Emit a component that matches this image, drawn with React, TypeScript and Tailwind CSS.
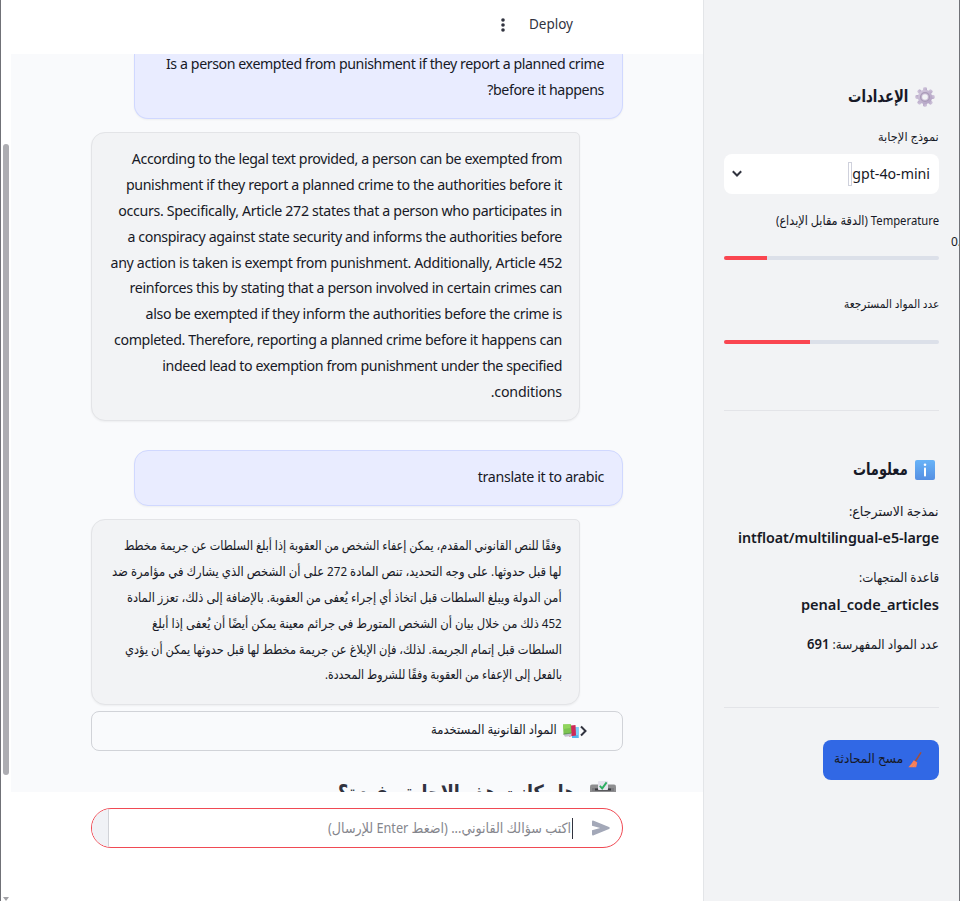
import { useLayoutEffect, useRef } from "react";
import type { ReactNode } from "react";

/* A single line of text fitted to a given measure: Latin by tracking, Arabic by width. */
function Line({ w, latin, className = "", children }: { w: number; latin?: boolean; className?: string; children: ReactNode }) {
  const ref = useRef<HTMLSpanElement>(null);
  useLayoutEffect(() => {
    const el = ref.current;
    if (!el) return;
    const fit = () => {
      el.style.letterSpacing = "";
      el.style.transform = "";
      const natural = el.offsetWidth;
      if (latin) el.style.letterSpacing = `${(w - natural) / (el.textContent || " ").length}px`;
      else el.style.transform = `scaleX(${w / natural})`;
    };
    fit();
    document.fonts.ready.then(fit);
  }, [w, latin]);
  return (
    <div dir="rtl" className={`flex justify-start whitespace-nowrap ${className}`} style={{ width: w }}>
      <span ref={ref} className="shrink-0 origin-right">{children}</span>
    </div>
  );
}

function Gear() {
  return (
    <svg width="20" height="20" viewBox="0 0 20 20">
      <defs>
        <linearGradient id="gear" x1="0" y1="0" x2="1" y2="1">
          <stop offset="0" stopColor="#d5cbdf" />
          <stop offset="1" stopColor="#ae9dc0" />
        </linearGradient>
      </defs>
      <g fill="url(#gear)">
        {[0, 45, 90, 135, 180, 225, 270, 315].map((a) => (
          <rect key={a} x="8" y="0.3" width="4" height="5" rx="1.4" transform={`rotate(${a} 10 10)`} />
        ))}
        <circle cx="10" cy="10" r="7.2" />
      </g>
      <circle cx="10" cy="10" r="4.4" fill="#c9bdd5" stroke="#a99bb8" strokeWidth="1.3" />
      <circle cx="10" cy="10" r="2.8" fill="#f2f3f6" />
    </svg>
  );
}

function InfoIcon() {
  return (
    <svg width="20" height="20" viewBox="0 0 20 20">
      <defs>
        <linearGradient id="info" x1="0" y1="0" x2="0" y2="1">
          <stop offset="0" stopColor="#67b3f8" />
          <stop offset="1" stopColor="#558fe2" />
        </linearGradient>
      </defs>
      <rect width="20" height="20" rx="2" fill="url(#info)" />
      <circle cx="10" cy="4.8" r="1.3" fill="#fff" />
      <rect x="9" y="7.5" width="2" height="9" rx="0.8" fill="#fff" />
    </svg>
  );
}

function Broom() {
  return (
    <svg width="14" height="16" viewBox="0 0 14 16">
      <path d="M12.7 0.8 L7.6 9" stroke="#a2503c" strokeWidth="1.5" strokeLinecap="round" />
      <path d="M5.8 8.2 L9.3 10.4 L8.2 15.3 L0.4 15.2 L3.6 11.6 Z" fill="#fb7a54" />
      <path d="M2.2 14.8 L5.5 11.4 M5.2 15 L7.4 11.8" stroke="#d9a177" strokeWidth="0.6" />
    </svg>
  );
}

function Books() {
  return (
    <svg width="16" height="14" viewBox="0 0 16 14">
      <path d="M9 3 L15.5 3 L15.8 14 L9 14 Z" fill="#55b6ee" />
      <path d="M12 3 L15.5 3 L15.8 11 L12.5 11 Z" fill="#7ed0f7" />
      <path d="M8 1.5 L12.5 1 L13 11.5 L6 12.5 Z" fill="#cd2858" />
      <path d="M0 0.5 L8 0.2 L8.5 9 L0.5 10.5 Z" fill="#7cc351" />
      <path d="M0 0.5 L7 0.2 L7 4 L0.2 5 Z" fill="#91d55e" />
      <path d="M0.5 10.5 L8.5 9 L8.5 12 L2 12.8 Z" fill="#c4bed0" />
      <path d="M0.5 10.2 L8.5 9" stroke="#4a8a42" strokeWidth="0.8" />
    </svg>
  );
}

function BallotBox() {
  return (
    <svg width="26" height="24" viewBox="0 0 26 24">
      <rect x="0" y="3.5" width="26" height="20" rx="2" fill="#8e8e90" />
      <rect x="2" y="7" width="22" height="3" fill="#7b7b7f" />
      <rect x="5" y="7.5" width="16" height="2" fill="#38383c" />
      <rect x="8" y="0" width="10" height="9" rx="0.7" fill="#e6e4ee" />
      <path d="M9.8 4.8 L12.2 7.4 L16.6 1.4" fill="none" stroke="#2eae62" strokeWidth="1.9" />
    </svg>
  );
}

const answer: [number, string][] = [
  [430, "According to the legal text provided, a person can be exempted from"],
  [436, "punishment if they report a planned crime to the authorities before it"],
  [444, "occurs. Specifically, Article 272 states that a person who participates in"],
  [435, "a conspiracy against state security and informs the authorities before"],
  [451, "any action is taken is exempt from punishment. Additionally, Article 452"],
  [432, "reinforces this by stating that a person involved in certain crimes can"],
  [416, "also be exempted if they inform the authorities before the crime is"],
  [448, "completed. Therefore, reporting a planned crime before it happens can"],
  [400, "indeed lead to exemption from punishment under the specified"],
  [71, "conditions."],
];

const translation: [number, string][] = [
  [438, "وفقًا للنص القانوني المقدم، يمكن إعفاء الشخص من العقوبة إذا أبلغ السلطات عن جريمة مخطط"],
  [450, "لها قبل حدوثها. على وجه التحديد، تنص المادة 272 على أن الشخص الذي يشارك في مؤامرة ضد"],
  [435, "أمن الدولة ويبلغ السلطات قبل اتخاذ أي إجراء يُعفى من العقوبة. بالإضافة إلى ذلك، تعزز المادة"],
  [410, "452 ذلك من خلال بيان أن الشخص المتورط في جرائم معينة يمكن أيضًا أن يُعفى إذا أبلغ"],
  [437, "السلطات قبل إتمام الجريمة. لذلك، فإن الإبلاغ عن جريمة مخطط لها قبل حدوثها يمكن أن يؤدي"],
  [237, "بالفعل إلى الإعفاء من العقوبة وفقًا للشروط المحددة."],
];

const latinText = "font-['Noto_Sans','DejaVu_Sans',sans-serif] text-[14.2px]";
const arabicText = "font-['Noto_Sans','DejaVu_Sans',sans-serif] text-[13px]";

function Chat() {
  return (
    <div dir="rtl" className="h-[738px] shrink-0 overflow-hidden bg-[#f9fafc] px-[80px]">
      <div className={`flow-root h-[65px] w-[489px] rounded-b-[14px] border border-t-0 border-[#d0d8ff] bg-[#e9ecff] pr-[18px] leading-[26px] shadow-xs ${latinText}`}>
        <div className="-mt-[3px]">
          <Line w={438} latin>Is a person exempted from punishment if they report a planned crime</Line>
          <Line w={117} latin>before it happens?</Line>
        </div>
      </div>
      <div className={`mt-[13px] mr-[43px] h-[289px] w-[489px] rounded-[14px] rounded-tr-[5px] border border-[#e3e4e7] bg-[#f2f3f5] pt-[13px] pr-[17px] leading-[25.87px] shadow-xs ${latinText}`}>
        {answer.map(([w, t]) => <Line key={t} w={w} latin>{t}</Line>)}
      </div>
      <div className={`mt-[29px] h-[56px] w-[489px] rounded-[14px] border border-[#d0d8ff] bg-[#e9ecff] pt-[13px] pr-[18px] leading-[26px] shadow-xs ${latinText}`}>
        <Line w={126} latin>translate it to arabic</Line>
      </div>
      <div className={`mt-[13px] mr-[43px] h-[186px] w-[489px] rounded-[14px] rounded-tr-[5px] border border-[#e3e4e7] bg-[#f2f3f5] pt-[13px] pr-[17px] leading-[25.87px] shadow-xs ${arabicText}`}>
        {translation.map(([w, t]) => <Line key={t} w={w}>{t}</Line>)}
      </div>
      <div className={`mt-[6px] flex h-[40px] w-[532px] items-center rounded-lg border border-[#d1d3d8] pr-[35px] ${arabicText}`}>
        <svg width="7" height="12" viewBox="0 0 7 12" fill="none" stroke="#31333f" strokeWidth="2"><path d="M1 1.5 L5.5 6 L1 10.5" /></svg>
        <div className="mr-px ml-[6px]"><Books /></div>
        <Line w={126} className="pb-[2px]">المواد القانونية المستخدمة</Line>
      </div>
      <div className="mt-[30px] flex pr-[7px] font-['Noto_Sans','DejaVu_Sans',sans-serif] text-[21px] leading-[30px] font-bold text-[#31333f]">
        <BallotBox />
        <Line w={238} className="-mt-[4px] mr-[14px]">هل كانت هذه الإجابة مفيدة؟</Line>
      </div>
    </div>
  );
}

function Prompt() {
  return (
    <div dir="rtl" className="mt-[16px] mr-[80px] flex h-[40px] w-[532px] items-center self-end overflow-hidden rounded-full border border-[#f04a54] bg-white text-[#85868d]">
      <svg className="mr-[12px]" width="18" height="16" viewBox="0 0 18 16" fill="#a3a8b8"><path d="M0 1.8 Q0 0 1.7 0.7 L17 7 Q18.6 8 17 8.9 L1.7 15.3 Q0 16 0 14.2 L0 10.2 L8.2 8 L0 5.8 Z" /></svg>
      <div className="mr-[19px] h-[21px] w-px bg-[#31333f]" />
      <Line w={243} className="mr-px pb-[2px] font-['Noto_Sans','DejaVu_Sans',sans-serif] text-[14px]">اكتب سؤالك القانوني... (اضغط Enter للإرسال)</Line>
      <div className="mr-auto h-full w-[17px] border-r border-[#d1d3d8] bg-[#f0f2f6]" />
    </div>
  );
}

function Sidebar() {
  return (
    <aside dir="rtl" className={`flex w-[257px] shrink-0 flex-col overflow-hidden border-r border-l border-r-[#707177] border-l-[#e3e5e8] bg-[#f2f3f5] pt-[84px] pr-[20px] pl-[20px] ${arabicText}`}>
      <h2 className="flex h-[26px] items-center pr-[4px] text-[17px] font-bold">
        <Gear />
        <Line w={60} className="mr-[7px] pb-[2px]">الإعدادات</Line>
      </h2>
      <div className="mt-[14px] flex h-[26px] items-center text-[12px]"><Line w={61}>نموذج الإجابة</Line></div>
      <div className="mt-[4px] flex h-[40px] shrink-0 items-center rounded-lg bg-white pr-[9px] pl-[8px] text-[14.2px]">
        <Line w={78} latin>gpt-4o-mini</Line>
        <span className="h-[24px] w-[4px] border border-[#cfd1dc]" />
        <svg className="mr-auto" width="10" height="8" viewBox="0 0 10 8" fill="none" stroke="#31333f" strokeWidth="2"><path d="M0.8 1.3 L5 5.5 L9.2 1.3" /></svg>
      </div>
      <div className="mt-[14px] flex h-[26px] items-center text-[13px]"><Line w={163}>Temperature (الدقة مقابل الإبداع)</Line></div>
      <div dir="ltr" className="-mr-[12px] flex h-[14px] w-0 items-center self-start pt-[2px] text-[12px] whitespace-nowrap">0.</div>
      <div dir="ltr" className="mt-[8px] h-[4px] shrink-0 rounded-full bg-[#dce0e9]"><div className="h-full w-[43px] rounded-l-full bg-[#fa4650]" /></div>
      <div className="mt-[31px] flex h-[26px] items-center text-[12px]"><Line w={95}>عدد المواد المسترجعة</Line></div>
      <div dir="ltr" className="mt-[23px] h-[4px] shrink-0 rounded-full bg-[#dce0e9]"><div className="h-full w-[86px] rounded-l-full bg-[#fa4650]" /></div>
      <hr className="mt-[66px] border-[#e3e4e8]" />
      <h2 className="mt-[46px] flex h-[26px] items-center pr-[4px] text-[17px] font-bold">
        <InfoIcon />
        <Line w={55} className="mr-[7px] pb-[2px]">معلومات</Line>
      </h2>
      <div className="mt-[15px] leading-[26.5px]">
        <Line w={90}>نمذجة الاسترجاع:</Line>
        <Line w={201} latin className="text-[14.3px] font-semibold">intfloat/multilingual-e5-large</Line>
      </div>
      <div className="mt-[13px] leading-[26.5px]">
        <Line w={80}>قاعدة المتجهات:</Line>
        <Line w={138} latin className="text-[14.6px] font-semibold">penal_code_articles</Line>
      </div>
      <div className="mt-[14px] leading-[26.5px]">
        <Line w={132}>عدد المواد المفهرسة: <b className="text-[14px] font-semibold">691</b></Line>
      </div>
      <hr className="mt-[49px] border-[#e3e4e8]" />
      <button className="mt-[32px] flex h-[40px] w-[116px] shrink-0 items-center rounded-lg bg-[#3168e5] pr-[17px]">
        <Broom />
        <Line w={69} className="mr-[5px] pb-[2px]">مسح المحادثة</Line>
      </button>
    </aside>
  );
}

export default function App() {
  return (
    <div className="flex h-[901px] w-[960px] overflow-hidden bg-white text-[#171926]">
      <div className="flex w-[11px] shrink-0 flex-col border-l border-[#707177] pt-[144px] pl-[2px]">
        <div className="h-[631px] w-[6px] shrink-0 rounded-full bg-[#adadb2]" />
        <svg className="mt-[121px]" width="6" height="5" viewBox="0 0 6 5" fill="#a2a2a6"><path d="M0 1 H6 L3 5 Z" /></svg>
      </div>
      <main className="flex w-[692px] shrink-0 flex-col">
        <header className="flex h-[54px] shrink-0 items-center justify-end pr-[130px] pb-[5px]">
          <svg className="mr-[24px]" width="4" height="14" viewBox="0 0 4 14" fill="#31333f"><circle cx="2" cy="2" r="1.8" /><circle cx="2" cy="7" r="1.8" /><circle cx="2" cy="12" r="1.8" /></svg>
          <Line w={44} latin className="font-['Noto_Sans',sans-serif] text-[13.5px] text-[#31333f]">Deploy</Line>
        </header>
        <Chat />
        <Prompt />
      </main>
      <Sidebar />
    </div>
  );
}
